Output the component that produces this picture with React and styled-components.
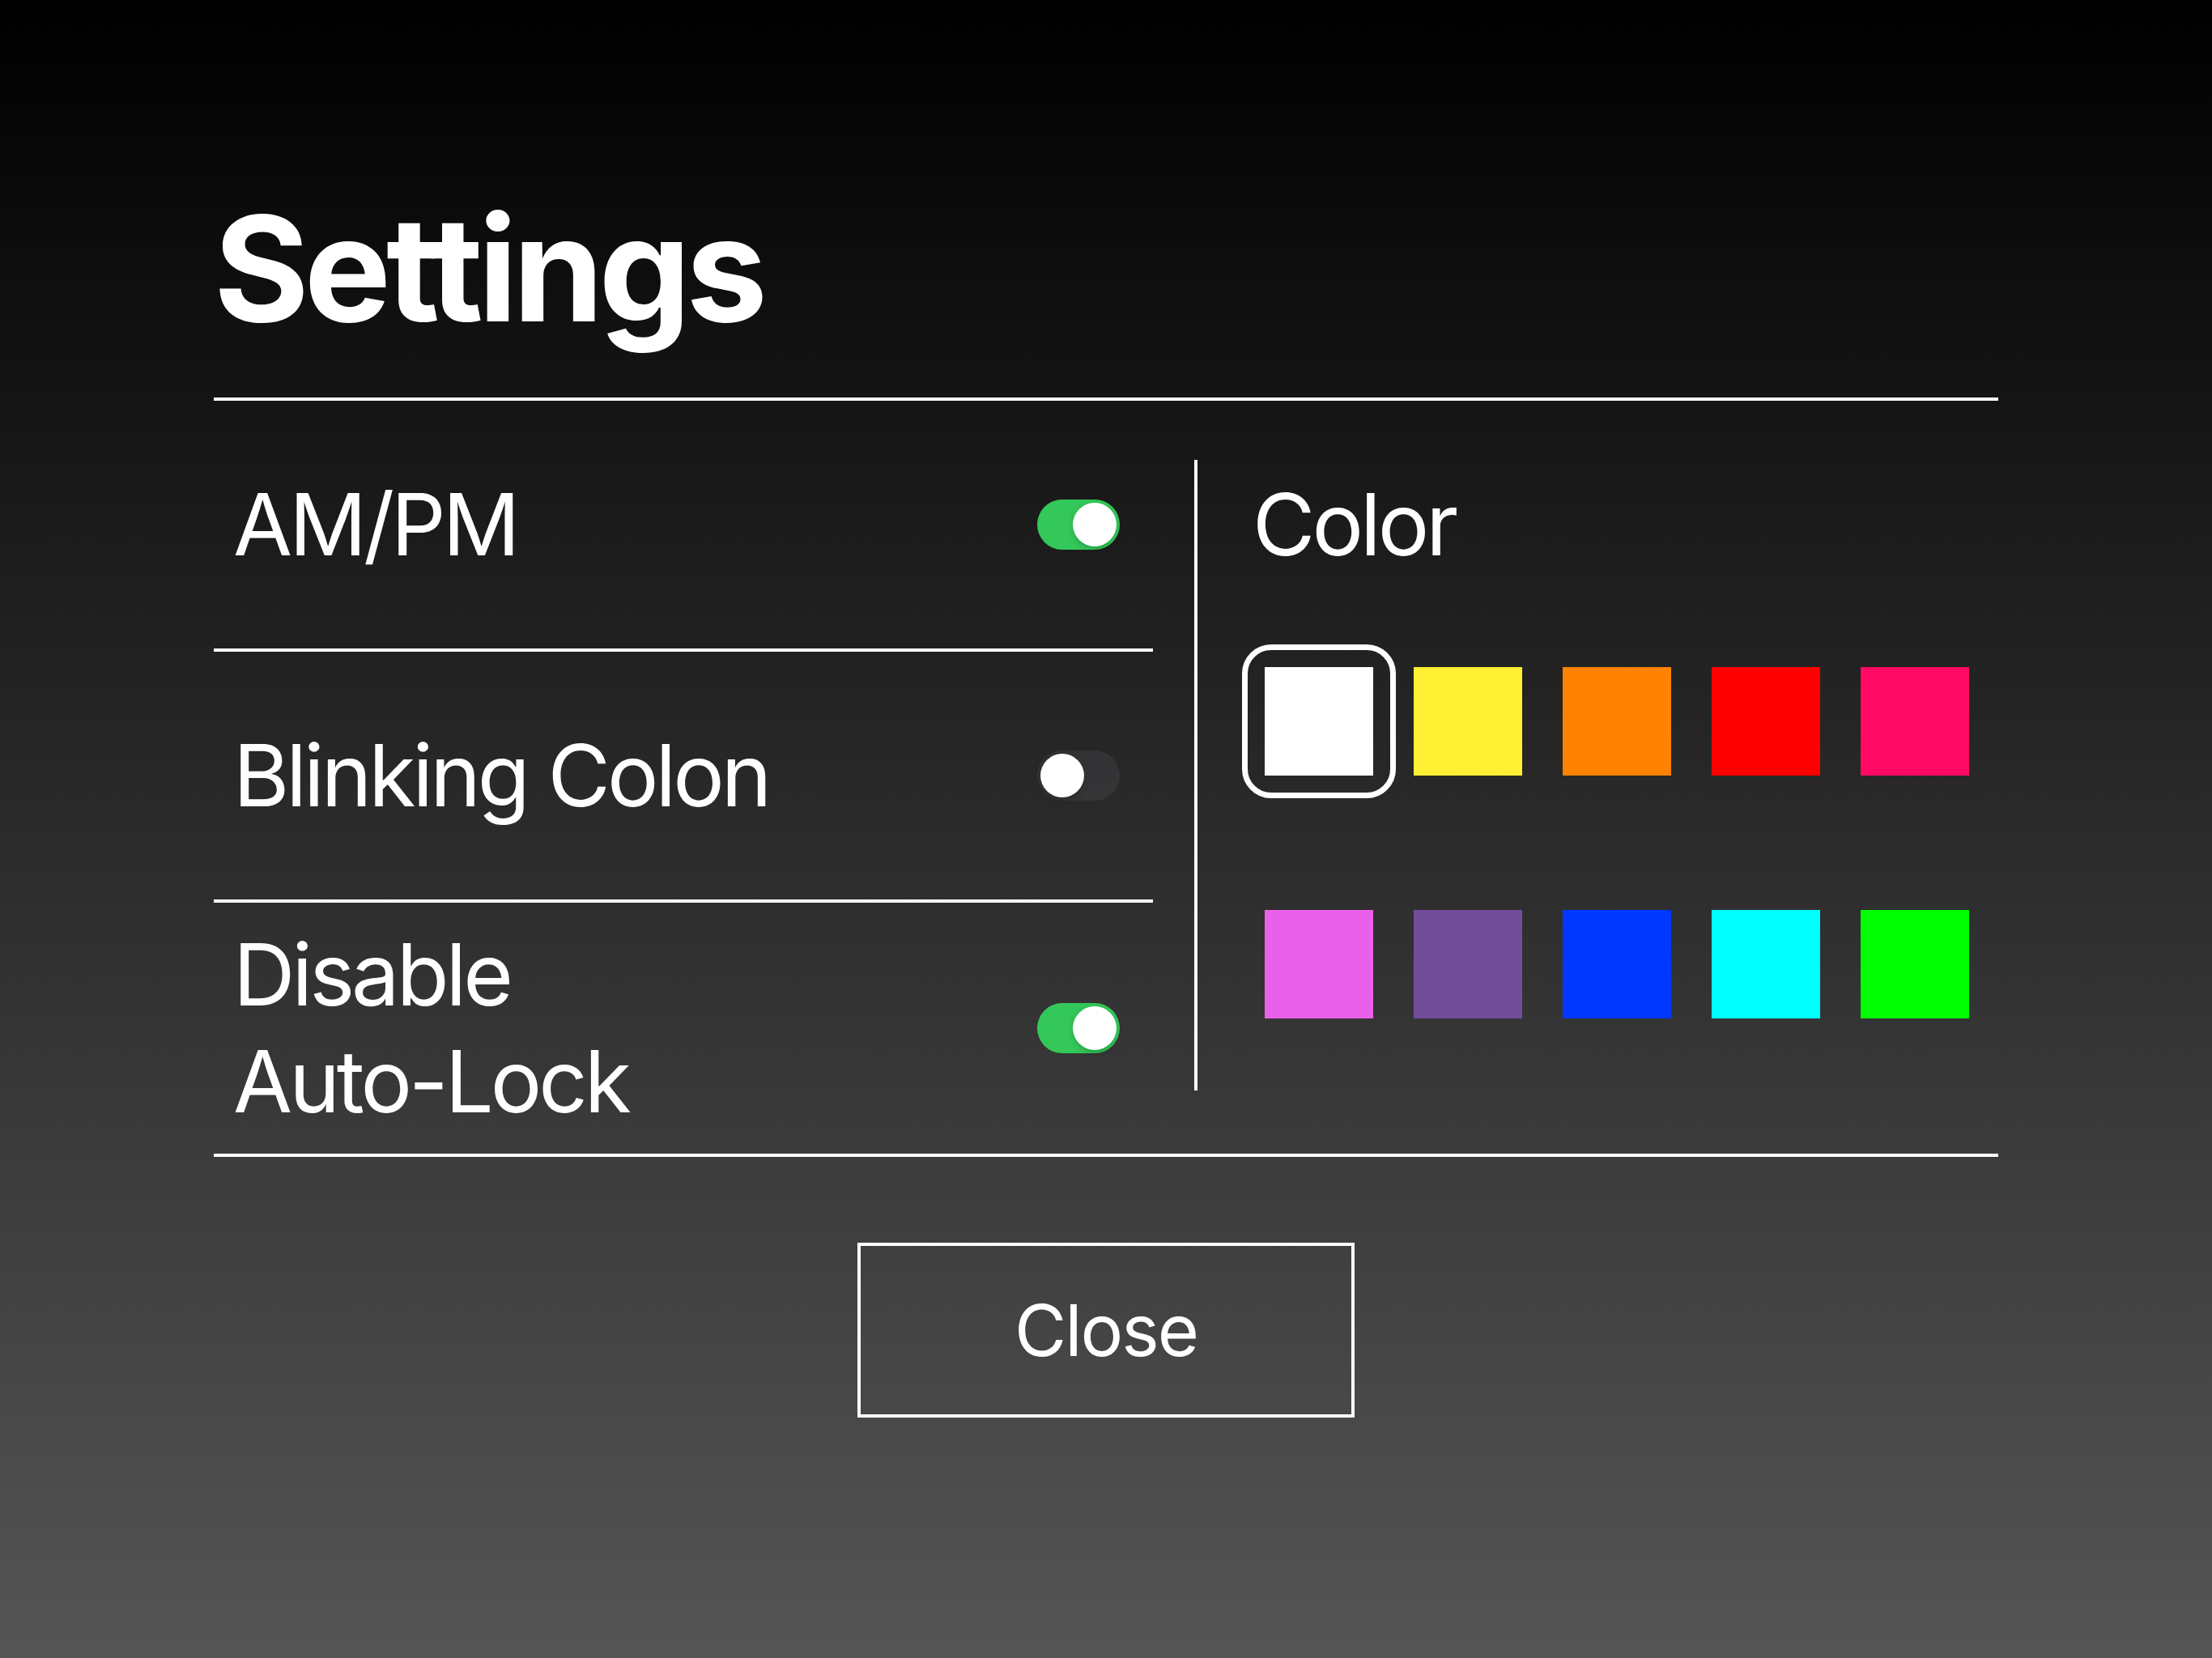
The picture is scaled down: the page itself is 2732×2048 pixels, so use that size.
import React, { useState } from 'react';
import styled, { createGlobalStyle } from 'styled-components';

const GlobalStyle = createGlobalStyle`
  html, body {
    margin: 0;
    padding: 0;
  }
  body {
    font-family: Inter, "Noto Sans", "Liberation Sans", sans-serif;
    color: #fff;
  }
`;

const COLORS = [
  '#ffffff',
  '#fff033',
  '#ff8200',
  '#ff0000',
  '#ff0a64',
  '#eb60eb',
  '#724e9a',
  '#0038ff',
  '#00ffff',
  '#00ff00',
];

function App() {
  const [ampm, setAmpm] = useState(true);
  const [blink, setBlink] = useState(false);
  const [noLock, setNoLock] = useState(true);
  const [color, setColor] = useState(COLORS[0]);

  return (
    <>
      <GlobalStyle />
      <Page>
        <Panel>
          <Title>Settings</Title>
          <Body>
            <LeftCol>
              <Row>
                <Label>AM/PM</Label>
                <Switch $on={ampm} onClick={() => setAmpm(!ampm)} />
              </Row>
              <Row>
                <Label>Blinking Colon</Label>
                <Switch $on={blink} onClick={() => setBlink(!blink)} />
              </Row>
              <Row>
                <Label>
                  Disable
                  <br />
                  Auto-Lock
                </Label>
                <Switch $on={noLock} onClick={() => setNoLock(!noLock)} />
              </Row>
            </LeftCol>
            <Separator />
            <RightCol>
              <Heading>Color</Heading>
              <Grid>
                {COLORS.map((c) => (
                  <Swatch
                    key={c}
                    $color={c}
                    $selected={c === color}
                    onClick={() => setColor(c)}
                  />
                ))}
              </Grid>
            </RightCol>
          </Body>
          <CloseButton>Close</CloseButton>
        </Panel>
      </Page>
    </>
  );
}

const Page = styled.div`
  width: 2732px;
  height: 2048px;
  box-sizing: border-box;
  padding-top: 242px;
  background: linear-gradient(180deg, #000 0%, #555 100%);
  display: flex;
  justify-content: center;
  overflow: hidden;
`;

const Panel = styled.div`
  width: 2204px;
  display: flex;
  flex-direction: column;
`;

const Title = styled.h1`
  margin: 0 0 69px 0;
  font-size: 180px;
  line-height: 180px;
  font-weight: 700;
  letter-spacing: -6px;
`;

const Body = styled.div`
  display: flex;
  border-top: 4px solid #fff;
  border-bottom: 4px solid #fff;
`;

const LeftCol = styled.div`
  width: 1160px;
  display: flex;
  flex-direction: column;
`;

const Row = styled.div`
  height: 306px;
  display: flex;
  align-items: center;
  justify-content: space-between;
  padding: 0 41px 0 24px;
  border-bottom: 4px solid #fff;

  &:last-child {
    height: 310px;
    border-bottom: none;
  }
`;

const Label = styled.div`
  font-size: 106px;
  line-height: 132px;
  font-weight: 400;
  letter-spacing: -4px;
`;

const Switch = styled.button`
  position: relative;
  flex-shrink: 0;
  width: 102px;
  height: 62px;
  border: none;
  padding: 0;
  border-radius: 31px;
  cursor: pointer;
  background: ${(p) => (p.$on ? '#34c759' : 'rgba(120, 120, 128, 0.16)')};

  &::after {
    content: '';
    position: absolute;
    top: 4px;
    left: ${(p) => (p.$on ? '44px' : '4px')};
    width: 54px;
    height: 54px;
    border-radius: 50%;
    background: #fff;
    box-shadow: 0 3px 8px rgba(0, 0, 0, 0.15), 0 3px 1px rgba(0, 0, 0, 0.06);
  }
`;

const Separator = styled.div`
  width: 4px;
  background: #fff;
  margin: 73px 0 78px 51px;
`;

const RightCol = styled.div`
  flex: 1;
  padding-left: 68px;
`;

const Heading = styled.div`
  height: 306px;
  display: flex;
  align-items: center;
  font-size: 106px;
  line-height: 132px;
  letter-spacing: -4px;
`;

const Grid = styled.div`
  display: grid;
  grid-template-columns: repeat(5, 134px);
  column-gap: 50px;
  row-gap: 166px;
  padding-top: 23px;
  margin-left: 15px;
`;

const Swatch = styled.div`
  position: relative;
  width: 134px;
  height: 134px;
  background: ${(p) => p.$color};
  cursor: pointer;

  &::before {
    content: '';
    display: ${(p) => (p.$selected ? 'block' : 'none')};
    position: absolute;
    inset: -28px;
    border: 7px solid #fff;
    border-radius: 36px;
  }
`;

const CloseButton = styled.button`
  align-self: center;
  margin-top: 106px;
  width: 614px;
  height: 216px;
  box-sizing: border-box;
  border: 4px solid #fff;
  background: transparent;
  color: #fff;
  font-family: Inter, "Noto Sans", "Liberation Sans", sans-serif;
  font-size: 88px;
  font-weight: 400;
  letter-spacing: -2px;
  cursor: pointer;
`;

export default App;
